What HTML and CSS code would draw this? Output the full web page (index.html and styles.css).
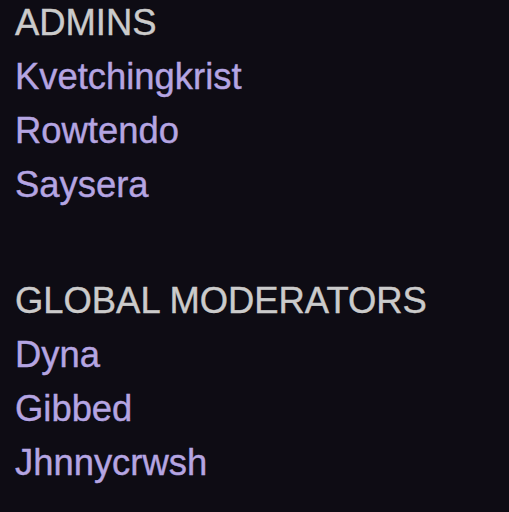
FILE: index.html
```html
<!DOCTYPE html>
<html lang="en">
<head>
    <meta charset="UTF-8">
    <meta name="viewport" content="width=device-width, initial-scale=1.0">
    <title>Staff</title>
    <link rel="stylesheet" href="styles.css">
</head>
<body>

<div class="staff">

    <div class="grupo">
        <div class="titulo">ADMINS</div>
        <div class="nome">Kvetchingkrist</div>
        <div class="nome">Rowtendo</div>
        <div class="nome">Saysera</div>
    </div>

    <div class="grupo">
        <div class="titulo">GLOBAL MODERATORS</div>
        <div class="nome">Dyna</div>
        <div class="nome">Gibbed</div>
        <div class="nome">Jhnnycrwsh</div>
    </div>

</div>

</body>
</html>
```

FILE: styles.css
```css
html, body {
    margin: 0;
    height: 100%;
    background: #0e0c14;
}

.staff {
    display: flex;
    flex-direction: column;
    gap: 70px;
    padding-left: 15px;
    font-family: "Liberation Sans", Arial, sans-serif;
    font-size: 36.4px;
    line-height: 46px;
    -webkit-text-stroke: 0.4px currentColor;
}

.grupo {
    display: flex;
    flex-direction: column;
    gap: 8px;
}

.titulo {
    color: #cbcbcb;
    white-space: nowrap;
}

.nome {
    color: #b5a5e2;
    white-space: nowrap;
}
```
